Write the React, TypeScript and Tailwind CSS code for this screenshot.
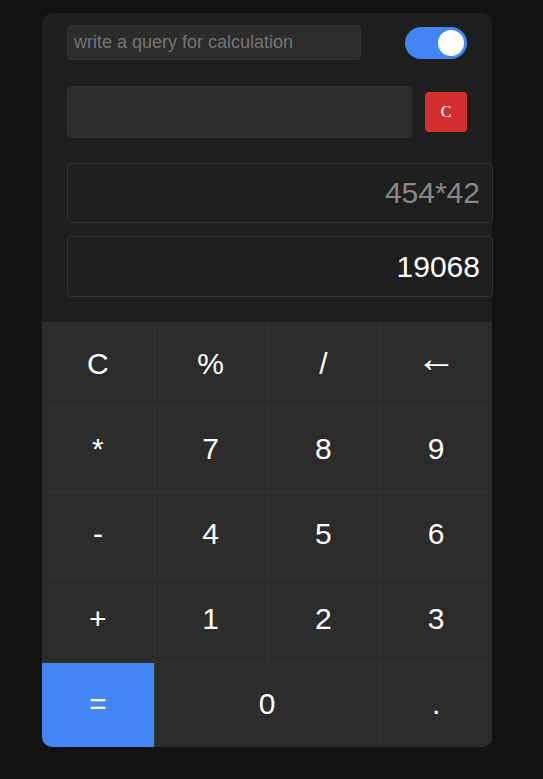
import React from "react";

const keys: { label: string; arrow?: boolean }[] = [
  { label: "C" },
  { label: "%" },
  { label: "/" },
  { label: "←", arrow: true },
  { label: "*" },
  { label: "7" },
  { label: "8" },
  { label: "9" },
  { label: "-" },
  { label: "4" },
  { label: "5" },
  { label: "6" },
  { label: "+" },
  { label: "1" },
  { label: "2" },
  { label: "3" },
];

export default function App() {
  return (
    <div
      className="min-h-[779px] w-full bg-[#121212] pt-[13px] pl-[42px]"
      style={{ fontFamily: '"Liberation Sans", Arial, sans-serif' }}
    >
      <div className="w-[450px] h-[734px] bg-[#1e1e1e] rounded-[10px] flex flex-col">
        <div className="pl-[25px] pr-[25px] pt-[12px] flex flex-col">
          <div className="flex items-center justify-between h-[35px]">
            <input
              className="w-[294px] h-[35px] bg-[#2c2c2c] border border-[#333] rounded-[4px] pl-[6px] text-[18px] text-white placeholder:text-[#757575] outline-none"
              placeholder="write a query for calculation"
              style={{ fontFamily: '"Liberation Sans", Arial, sans-serif' }}
            />
            <div className="w-[62px] h-[32px] rounded-full bg-[#4285f4] flex items-center justify-end pr-[3px] mt-[1px]">
              <div className="w-[26px] h-[26px] rounded-full bg-white" />
            </div>
          </div>
          <div className="flex items-center mt-[26px] gap-[13px]">
            <div className="w-[345px] h-[52px] bg-[#2c2c2c] border border-[#333] rounded-[4px]" />
            <button
              className="w-[42px] h-[40px] bg-[#d32f2f] rounded-[4px] text-white text-[16px] flex items-center justify-center"
              style={{ fontFamily: '"Liberation Serif", "Times New Roman", serif' }}
            >
              C
            </button>
          </div>
          <div className="mt-[25px] w-[426px] h-[60px] border border-[#333] rounded-[4px] flex items-center justify-end pr-[12px] pb-[1px] text-[30px] text-[#888]">
            454*42
          </div>
          <div className="mt-[13px] w-[426px] h-[61px] border border-[#333] rounded-[4px] flex items-center justify-end pr-[12px] text-[30px] text-white">
            19068
          </div>
        </div>
        <div className="mt-[25px] flex-1 grid grid-cols-4 grid-rows-5 gap-px bg-[#333] rounded-b-[10px] overflow-hidden">
          {keys.map((k, i) => (
            <div
              key={i}
              className={
                k.arrow
                  ? "bg-[#2c2c2c] flex items-center justify-center pb-[13px] text-[40px] text-white"
                  : "bg-[#2c2c2c] flex items-center justify-center pb-[2px] text-[30px] text-white"
              }
            >
              {k.label}
            </div>
          ))}
          <div className="bg-[#4285f4] flex items-center justify-center pb-[2px] text-[30px] text-white">
            =
          </div>
          <div className="col-span-2 bg-[#2c2c2c] flex items-center justify-center pb-[2px] text-[30px] text-white">
            0
          </div>
          <div className="bg-[#2c2c2c] flex items-center justify-center pb-[2px] text-[30px] text-white">
            .
          </div>
        </div>
      </div>
    </div>
  );
}
